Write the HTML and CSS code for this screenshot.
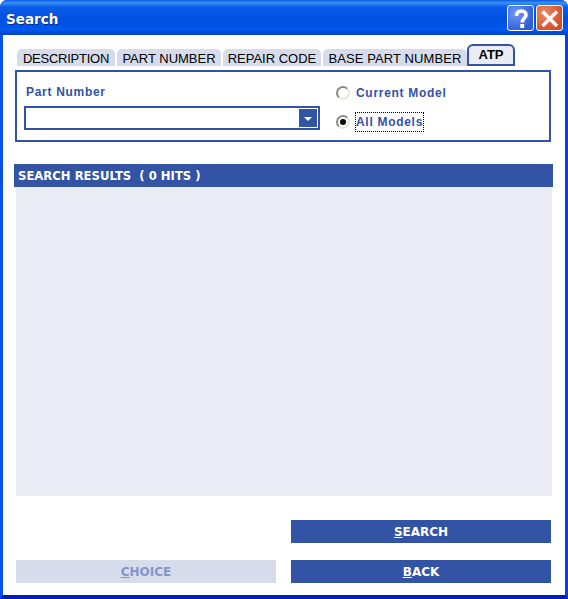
FILE: index.html
```html
<!DOCTYPE html>
<html lang="en">
<head>
    <meta charset="UTF-8">
    <title>Search</title>
    <link rel="stylesheet" href="styles.css">
</head>
<body>
    <div class="window">
        <div class="title-bar">
            <span class="title-text">Search</span>
            <button class="caption-btn help-btn">
                <svg width="21" height="21" viewBox="0 0 21 21"><path d="M6.6 8C6.6 4.3 8.6 3 11.3 3C14.3 3 16 4.8 16 7C16 10.2 12.2 10.4 12.2 14.4" fill="none" stroke="#fff" stroke-width="3.6"/><rect x="10.2" y="16" width="4" height="4" fill="#fff"/></svg>
            </button>
            <button class="caption-btn close-btn">
                <svg width="21" height="21" viewBox="0 0 21 21"><path d="M3.5 3.5L18 18M18 3.5L3.5 18" fill="none" stroke="#fff" stroke-width="3.4"/></svg>
            </button>
        </div>

        <div class="client">
            <div class="tabs">
                <div class="tab tab-description">DESCRIPTION</div>
                <div class="tab tab-part">PART NUMBER</div>
                <div class="tab tab-repair">REPAIR CODE</div>
                <div class="tab tab-base">BASE PART NUMBER</div>
                <div class="tab tab-active">ATP</div>
            </div>

            <div class="panel">
                <div class="field">
                    <label class="field-label">Part Number</label>
                    <div class="combo">
                        <div class="combo-arrow"></div>
                    </div>
                </div>
                <div class="radios">
                    <div class="radio-row">
                        <span class="radio"></span>
                        <span class="radio-label">Current Model</span>
                    </div>
                    <div class="radio-row">
                        <span class="radio checked"></span>
                        <span class="radio-label focused">All Models</span>
                    </div>
                </div>
            </div>

            <div class="results-header">SEARCH RESULTS&nbsp; ( 0 HITS )</div>
            <div class="results-list"></div>

            <div class="actions">
                <div class="action-row end">
                    <button class="action-btn"><u>S</u>EARCH</button>
                </div>
                <div class="action-row">
                    <button class="action-btn disabled"><u>C</u>HOICE</button>
                    <button class="action-btn"><u>B</u>ACK</button>
                </div>
            </div>
        </div>
    </div>
</body>
</html>
```

FILE: styles.css
```css
* {
    margin: 0;
    padding: 0;
    box-sizing: border-box;
}

body {
    width: 568px;
    height: 599px;
    overflow: hidden;
    background: #fff;
    font-family: 'DejaVu Sans', Verdana, sans-serif;
}

.window {
    width: 568px;
    height: 599px;
    display: flex;
    flex-direction: column;
    background: #0a4ff0;
    border-radius: 7px 7px 0 0;
}

.title-bar {
    height: 35px;
    display: flex;
    align-items: flex-start;
    padding: 5px 5px 0 6px;
    gap: 2px;
    border-radius: 7px 7px 0 0;
    background: linear-gradient(180deg, #0a5ae0 0%, #3a90f5 8%, #0a5ce8 20%, #0050e0 55%, #0058ee 85%, #0040c8 100%);
}

.title-text {
    flex: 1;
    margin-top: 6px;
    color: #fff;
    font-size: 13.5px;
    font-weight: bold;
    text-shadow: 1px 1px 0 #0a2a90;
}

.caption-btn {
    width: 27px;
    height: 26px;
    border: 1px solid #fff;
    border-radius: 3px;
    display: flex;
    align-items: center;
    justify-content: center;
}

.help-btn {
    background: radial-gradient(circle at 30% 30%, #6f97f0, #2d5fdc 75%);
}

.close-btn {
    background: radial-gradient(circle at 30% 30%, #ea8a66, #d2502a 75%);
}

.client {
    flex: 1;
    background: #fff;
    padding: 9px 13px 12px 11px;
    display: flex;
    flex-direction: column;
    border-left: 3px solid #0a50f0;
    border-right: 3px solid #0a3fd8;
    border-bottom: 4px solid #0020b0;
}

.tabs {
    display: flex;
    align-items: flex-end;
    height: 22px;
    padding-left: 3px;
}

.tab {
    height: 17px;
    background: #d6dcec;
    border-radius: 5px 5px 0 0;
    font-family: 'Liberation Sans', Arial, sans-serif;
    font-size: 13px;
    line-height: 19px;
    color: #000;
    text-align: center;
}

.tab-description {
    width: 98px;
    margin-right: 2px;
    letter-spacing: -0.25px;
}

.tab-part {
    width: 104px;
    margin-right: 2px;
}

.tab-repair {
    width: 98px;
    margin-right: 2px;
}

.tab-base {
    width: 144px;
    letter-spacing: 0.1px;
}

.tab-active {
    width: 48px;
    height: 22px;
    background: #e9ecf5;
    border: 2px solid #3353a4;
    border-radius: 6px 6px 0 0;
    font-weight: bold;
    line-height: 18px;
    letter-spacing: 0;
}

.panel {
    margin: 4px 0 0 1px;
    width: 536px;
    height: 72px;
    border: 2px solid #3353a4;
    display: flex;
    color: #3353a4;
    font-family: 'Liberation Sans', Arial, sans-serif;
    font-size: 12px;
    font-weight: bold;
    letter-spacing: 0.7px;
}

.field {
    width: 319px;
    padding: 12px 0 0 7px;
}

.field-label {
    display: block;
    height: 22px;
    line-height: 16px;
    padding-left: 2px;
}

.combo {
    width: 296px;
    height: 24px;
    border: 2px solid #3353a4;
    background: #fff;
    display: flex;
    justify-content: flex-end;
    padding: 1px;
}

.combo-arrow {
    width: 18px;
    background: #3353a4;
    position: relative;
}

.combo-arrow::after {
    content: '';
    position: absolute;
    left: 5px;
    top: 8px;
    border: 4px solid transparent;
    border-top-color: #fff;
    border-bottom: 0;
}

.radios {
    display: flex;
    flex-direction: column;
    padding-top: 12px;
    gap: 11px;
}

.radio-row {
    display: flex;
    align-items: center;
    gap: 5px;
    height: 18px;
}

.radio {
    width: 14px;
    height: 14px;
    border-radius: 50%;
    background: #fff;
    border: 2px solid #8e8c80;
    border-right-color: #e8e6dc;
    border-bottom-color: #e8e6dc;
    position: relative;
}

.radio.checked::after {
    content: '';
    position: absolute;
    left: 2px;
    top: 2px;
    width: 6px;
    height: 6px;
    border-radius: 50%;
    background: #000;
}

.radio-label {
    padding: 0 1px;
    line-height: 20px;
}

.radio-label.focused {
    outline: 1px dotted #000;
    outline-offset: -1px;
}

.results-header {
    margin: 22px 0 0 0;
    width: 539px;
    height: 23px;
    background: #3353a4;
    color: #fff;
    font-size: 11.65px;
    font-weight: bold;
    line-height: 24px;
    padding-left: 4px;
}

.results-list {
    margin-left: 2px;
    width: 536px;
    height: 309px;
    background: #e9ecf5;
    border-bottom: 1px solid #f2f1e2;
}

.actions {
    margin-top: 24px;
    margin-left: 2px;
    display: flex;
    flex-direction: column;
    gap: 17px;
}

.action-row {
    display: flex;
    justify-content: space-between;
    width: 535px;
}

.action-row.end {
    justify-content: flex-end;
}

.action-btn {
    width: 260px;
    height: 23px;
    border: none;
    background: #3353a4;
    color: #fff;
    font-family: 'DejaVu Sans', Verdana, sans-serif;
    font-size: 12px;
    font-weight: bold;
}

.action-btn.disabled {
    background: #d6dcec;
    color: #8496c8;
}
```
